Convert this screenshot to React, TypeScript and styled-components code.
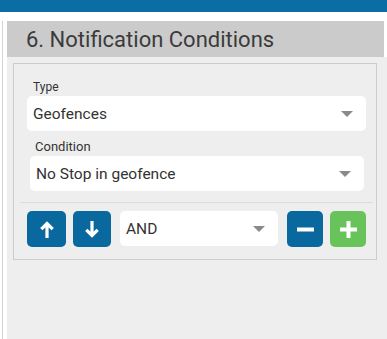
import React from 'react';
import styled, { createGlobalStyle } from 'styled-components';

const GlobalStyle = createGlobalStyle`
  html, body {
    margin: 0;
    padding: 0;
    background: #fff;
    font-family: Roboto, "Noto Sans", Arial, sans-serif;
  }
`

const TopBar = styled.div`
  height: 12px;
  background: #0a6ea5;
`

const Main = styled.div`
  margin-top: 9px;
  display: flex;
  height: 318px;
`

const SideStrip = styled.div`
  width: 4px;
  margin-left: 2px;
  border-left: 1px solid #d3d3d3;
`

const Panel = styled.div`
  flex: 1;
  display: flex;
  flex-direction: column;
`

const PanelHeader = styled.h3`
  margin: 0 3px 0 0;
  height: 36px;
  background: #cbcbcb;
  color: #3b3b3b;
  font-size: 22px;
  font-weight: 400;
  line-height: 37px;
  padding-left: 19px;
`

const PanelBody = styled.div`
  flex: 1;
  background: #eeeeee;
  padding: 6px 10px 0 6px;
`

const ConditionBox = styled.div`
  border: 1px solid #cccccc;
  padding: 15px 10px 12px 13px;
`

const Label = styled.div<{ $indent: number; $size: number }>`
  font-size: ${p => p.$size}px;
  line-height: 16px;
  color: #333;
  padding-left: ${p => p.$indent}px;
  margin-bottom: 1px;
`

const Field = styled.div<{ $mx?: string }>`
  margin: ${p => p.$mx || '0'};
`

const Select = styled.div`
  display: flex;
  align-items: center;
  justify-content: space-between;
  height: 35px;
  background: #fff;
  border-radius: 5px;
  padding: 0 13px 0 6px;
  font-size: 15.5px;
  color: #333;
  flex: 1;
`

const Caret = styled.span`
  width: 0;
  height: 0;
  border-left: 6px solid transparent;
  border-right: 6px solid transparent;
  border-top: 6px solid #8a8a8a;
`

const Separator = styled.div`
  height: 1px;
  background: #dcdcdc;
  margin: 11px -7px 8px -7px;
`

const ButtonRow = styled.div`
  display: flex;
  align-items: flex-start;
`

const IconButton = styled.button<{ $w: number; $color: string; $gap: number }>`
  width: ${p => p.$w}px;
  height: 36px;
  border: none;
  border-radius: 5px;
  background: ${p => p.$color};
  margin-left: ${p => p.$gap}px;
  padding: 0;
  display: flex;
  align-items: center;
  justify-content: center;
  flex-shrink: 0;
`

const AndSelect = styled(Select)`
  margin-left: 9px;
  padding-left: 6px;
`

const BLUE = '#09699e'
const GREEN = '#68c45a'

function Arrow({ down }: { down?: boolean }) {
  return (
    <svg width="14" height="17" viewBox="0 0 14 17"
      style={down ? { transform: 'rotate(180deg)' } : undefined}>
      <path d="M7 2.5 V17 M1.3 8.2 L7 2.5 L12.7 8.2" fill="none" stroke="#fff"
        strokeWidth="3.2" strokeLinejoin="miter" />
    </svg>
  )
}

function Minus() {
  return (
    <svg width="17" height="17" viewBox="0 0 17 17">
      <rect x="0" y="6.5" width="17" height="4" fill="#fff" />
    </svg>
  )
}

function Plus() {
  return (
    <svg width="17" height="17" viewBox="0 0 17 17">
      <rect x="0" y="6.5" width="17" height="4" fill="#fff" />
      <rect x="6.5" y="0" width="4" height="17" fill="#fff" />
    </svg>
  )
}

export default function App() {
  return (
    <>
      <GlobalStyle />
      <TopBar />
      <Main>
        <SideStrip />
        <Panel>
          <PanelHeader>6. Notification Conditions</PanelHeader>
          <PanelBody>
            <ConditionBox>
              <Field>
                <Label $indent={6} $size={12}>Type</Label>
                <Select>
                  Geofences
                  <Caret />
                </Select>
              </Field>
              <Field $mx="8px 2px 0 3px">
                <Label $indent={5} $size={13}>Condition</Label>
                <Select>
                  No Stop in geofence
                  <Caret />
                </Select>
              </Field>
              <Separator />
              <ButtonRow>
                <IconButton $w={39} $color={BLUE} $gap={0}><Arrow /></IconButton>
                <IconButton $w={38} $color={BLUE} $gap={7}><Arrow down /></IconButton>
                <AndSelect>
                  AND
                  <Caret />
                </AndSelect>
                <IconButton $w={36} $color={BLUE} $gap={9}><Minus /></IconButton>
                <IconButton $w={36} $color={GREEN} $gap={7}><Plus /></IconButton>
              </ButtonRow>
            </ConditionBox>
          </PanelBody>
        </Panel>
      </Main>
    </>
  );
}
